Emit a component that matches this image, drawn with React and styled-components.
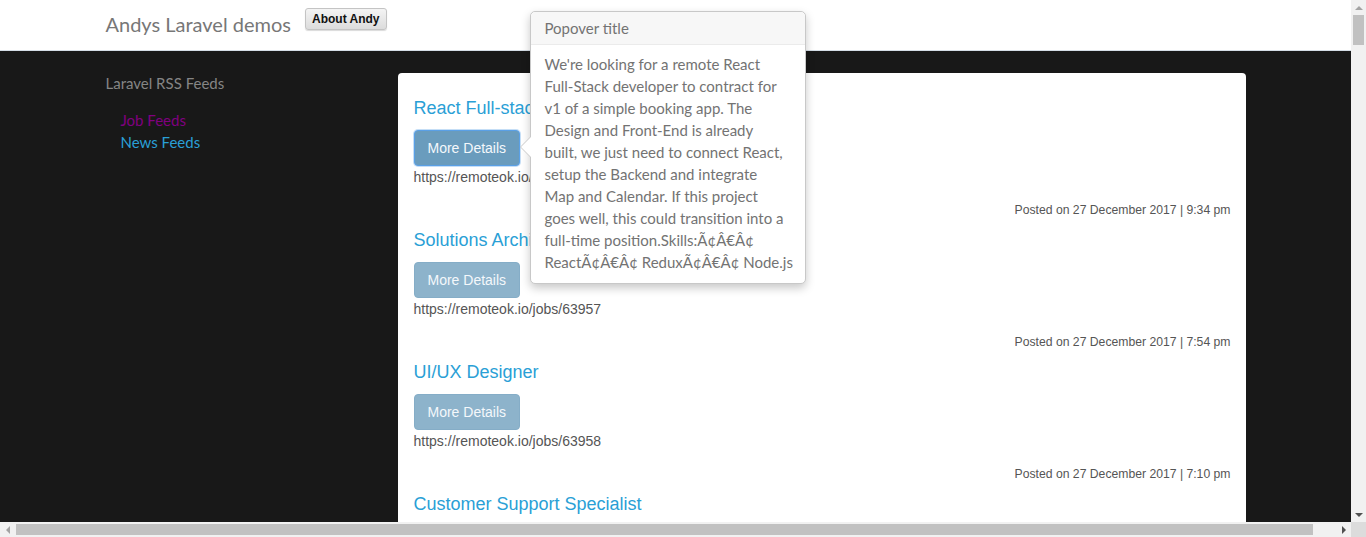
import styled, { createGlobalStyle } from "styled-components";

const GlobalStyle = createGlobalStyle`
  html, body {
    margin: 0;
    padding: 0;
    overflow: hidden;
  }
  body {
    background: #181818;
    font-family: "Liberation Sans", Arial, sans-serif;
    font-size: 14px;
    color: #555;
  }
`;

const Frame = styled.div`
  width: 1366px;
  height: 537px;
  display: flex;
  flex-direction: column;
  overflow: hidden;
`;

const FrameRow = styled.div`
  display: flex;
  flex: 1;
  min-height: 0;
`;

const Viewport = styled.div`
  flex: 1;
  overflow: hidden;
  background: #181818;
`;

const VScroll = styled.div`
  width: 15px;
  flex: none;
  background: #f1f1f1;
  display: flex;
  flex-direction: column;
  align-items: center;
`;

const HScroll = styled.div`
  height: 15px;
  flex: none;
  background: #f1f1f1;
  display: flex;
  align-items: center;
`;

const Arrow = styled.div`
  width: 15px;
  height: 15px;
  flex: none;
  display: flex;
  align-items: center;
  justify-content: center;

  &::after {
    content: "";
    border-style: solid;
    border-color: transparent;
    ${({ $dir }) =>
      ({
        up: "border-width: 0 4px 4px 4px; border-bottom-color: #a3a3a3;",
        down: "border-width: 4px 4px 0 4px; border-top-color: #505050;",
        left: "border-width: 4px 4px 4px 0; border-right-color: #a3a3a3;",
        right: "border-width: 4px 0 4px 4px; border-left-color: #505050;",
      })[$dir]}
  }
`;

const VTrack = styled.div`
  flex: 1;
  width: 100%;
  display: flex;
  justify-content: center;
`;

const VThumb = styled.div`
  width: 11px;
  height: 30px;
  background: #c1c1c1;
`;

const HTrack = styled.div`
  flex: 1;
  height: 100%;
  display: flex;
  align-items: center;
  padding-left: 1px;
`;

const HThumb = styled.div`
  height: 11px;
  width: 1297px;
  background: #c1c1c1;
`;

const Corner = styled.div`
  width: 15px;
  height: 15px;
  flex: none;
  background: #dcdcdc;
`;

const Navbar = styled.nav`
  height: 50px;
  background: #fff;
  border-bottom: 1px solid #d4dde6;
`;

const Container = styled.div`
  width: 1170px;
  margin: 0 auto;
  padding: 0 15px;
  box-sizing: border-box;
  display: flex;
  align-items: ${({ $top }) => ($top ? "flex-start" : "center")};
  height: ${({ $nav }) => ($nav ? "50px" : "auto")};
`;

const Brand = styled.a`
  font-family: Lato, "Open Sans", sans-serif;
  font-size: 20px;
  color: #777;
  text-decoration: none;
  margin-right: 15px;
  position: relative;
  top: -1px;
`;

const AboutButton = styled.button`
  font-family: "Liberation Sans", Arial, sans-serif;
  font-weight: bold;
  font-size: 12px;
  color: #111;
  height: 22px;
  padding: 0 6px;
  border: 1px solid #c4c4c4;
  border-radius: 3px;
  background: linear-gradient(#f4f4f4, #dcdcdc);
  box-shadow: 0 1px 1px rgba(0, 0, 0, 0.15);
  position: relative;
  top: -6px;
  left: -1px;
`;

const Sidebar = styled.aside`
  width: 292px;
  flex: none;
  padding-top: 23px;
`;

const SideTitle = styled.h4`
  font-family: Lato, "Open Sans", sans-serif;
  font-weight: 400;
  font-size: 15px;
  color: #858585;
  margin: 0 0 17px;
`;

const SideList = styled.ul`
  list-style: none;
  margin: 0;
  padding: 0 0 0 15px;
  font-family: Lato, "Open Sans", sans-serif;
  font-size: 15px;
  line-height: 22px;
`;

const SideLink = styled.a`
  color: ${({ $visited }) => ($visited ? "#800080" : "#2a9fd6")};
  text-decoration: none;
`;

const Main = styled.main`
  flex: 1;
  padding: 22px 0 0 0;
  min-width: 0;
`;

const Card = styled.div`
  position: relative;
  background: #fff;
  border-radius: 4px;
  padding: 23px 15px 0 16px;
`;

const Item = styled.div`
  display: flex;
  flex-direction: column;
  align-items: flex-start;
  height: 132px;
`;

const JobTitle = styled.a`
  font-family: "Liberation Sans", Arial, sans-serif;
  font-size: 18px;
  line-height: 24px;
  color: #2a9fd6;
  text-decoration: none;
  margin-bottom: 10px;
`;

const DetailsButton = styled.button`
  font-family: "Liberation Sans", Arial, sans-serif;
  font-size: 14px;
  color: #f4f8fb;
  height: 36px;
  padding: 0 13px;
  border-radius: 4px;
  border: 1px solid ${({ $active }) => ($active ? "#5aa0e6" : "#85adc7")};
  background: ${({ $active }) => ($active ? "#6a9cbd" : "#8db3cb")};
  box-shadow: ${({ $active }) =>
    $active ? "0 0 0 1px rgba(90, 160, 230, 0.35)" : "none"};
`;

const Url = styled.div`
  font-size: 14px;
  line-height: 20px;
  color: #555;
  margin-top: 1px;
`;

const Posted = styled.div`
  align-self: flex-end;
  font-size: 12.2px;
  color: #555;
  margin-top: 16px;
`;

const Popover = styled.div`
  position: absolute;
  left: 132px;
  top: -62px;
  width: 276px;
  box-sizing: border-box;
  background: #fff;
  border: 1px solid #c8c8c8;
  border-radius: 5px;
  box-shadow: 0 4px 10px rgba(0, 0, 0, 0.22);
  font-family: Lato, "Open Sans", sans-serif;
  font-size: 15px;
  color: #737373;
  z-index: 5;

  &::before,
  &::after {
    content: "";
    position: absolute;
    top: 124px;
    border-style: solid;
    border-color: transparent;
  }
  &::before {
    left: -11px;
    border-width: 11px 11px 11px 0;
    border-right-color: #c8c8c8;
  }
  &::after {
    left: -10px;
    top: 125px;
    border-width: 10px 10px 10px 0;
    border-right-color: #fff;
  }
`;

const PopoverTitle = styled.div`
  background: #f7f7f7;
  border-bottom: 1px solid #ebebeb;
  border-radius: 5px 5px 0 0;
  padding: 0 14px;
  height: 32px;
  line-height: 32px;
`;

const PopoverBody = styled.div`
  padding: 8px 14px 10px;
  line-height: 22px;
  white-space: nowrap;
`;

const popoverLines = [
  "We're looking for a remote React",
  "Full-Stack developer to contract for",
  "v1 of a simple booking app. The",
  "Design and Front-End is already",
  "built, we just need to connect React,",
  "setup the Backend and integrate",
  "Map and Calendar. If this project",
  "goes well, this could transition into a",
  "full-time position.Skills:Ã¢Â€Â¢",
  "ReactÃ¢Â€Â¢ ReduxÃ¢Â€Â¢ Node.js",
];

const baseJobs = [
  { title: "React Full-stack Developer", id: 63956, posted: "27 December 2017 | 9:34 pm" },
  { title: "Solutions Architect", id: 63957, posted: "27 December 2017 | 7:54 pm" },
  { title: "UI/UX Designer", id: 63958, posted: "27 December 2017 | 7:10 pm" },
  { title: "Customer Support Specialist", id: 63959, posted: "27 December 2017 | 6:42 pm" },
];

export default function App() {
  return (
    <>
      <GlobalStyle />
      <Frame>
        <FrameRow>
          <Viewport>
            <Navbar>
              <Container $nav>
                <Brand href="#">Andys Laravel demos</Brand>
                <AboutButton>About Andy</AboutButton>
              </Container>
            </Navbar>
            <Container $top>
              <Sidebar>
                <SideTitle>Laravel RSS Feeds</SideTitle>
                <SideList>
                  <li>
                    <SideLink href="#" $visited>
                      Job Feeds
                    </SideLink>
                  </li>
                  <li>
                    <SideLink href="#">News Feeds</SideLink>
                  </li>
                </SideList>
              </Sidebar>
              <Main>
                <Card>
                  {baseJobs.map((job, i) => (
                    <Item key={job.id}>
                      <JobTitle href="#">{job.title}</JobTitle>
                      <DetailsButton $active={i === 0}>More Details</DetailsButton>
                      <Url>https://remoteok.io/jobs/{job.id}</Url>
                      <Posted>Posted on {job.posted}</Posted>
                    </Item>
                  ))}
                  <Popover>
                    <PopoverTitle>Popover title</PopoverTitle>
                    <PopoverBody>
                      {popoverLines.map((line) => (
                        <div key={line}>{line}</div>
                      ))}
                    </PopoverBody>
                  </Popover>
                </Card>
              </Main>
            </Container>
          </Viewport>
          <VScroll>
            <Arrow $dir="up" />
            <VTrack>
              <VThumb />
            </VTrack>
            <Arrow $dir="down" />
          </VScroll>
        </FrameRow>
        <HScroll>
          <Arrow $dir="left" />
          <HTrack>
            <HThumb />
          </HTrack>
          <Arrow $dir="right" />
          <Corner />
        </HScroll>
      </Frame>
    </>
  );
}
